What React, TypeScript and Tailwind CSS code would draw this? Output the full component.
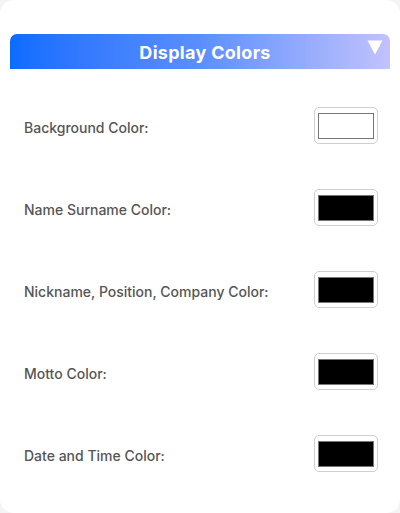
import React from "react";

const rows = [
  { label: "Background Color:", color: "#ffffff" },
  { label: "Name Surname Color:", color: "#000000" },
  { label: "Nickname, Position, Company Color:", color: "#000000" },
  { label: "Motto Color:", color: "#000000" },
  { label: "Date and Time Color:", color: "#000000" },
];

function Swatch({ color }: { color: string }) {
  return (
    <div className="w-[64px] h-[37px] border border-[#cfcfcf] rounded-[5px] bg-white pl-[3px] pr-[3px] pt-[5px] pb-[4px]">
      <div className="w-full h-full border border-[#767676]" style={{ backgroundColor: color }} />
    </div>
  );
}

export default function App() {
  return (
    <div className="w-[400px] h-[513px] bg-[#f4f4f4] font-['Inter',sans-serif]">
      <div className="w-full h-full bg-white rounded-[14px] pt-[34px] px-[10px]">
        <div className="relative h-[35px] rounded-t-[7px] bg-gradient-to-r from-[#0a6cff] via-[#5b8efd] to-[#c2c2fc] flex items-center justify-center">
          <span className="text-white font-bold text-[18px] tracking-[0.3px] pl-[10px] pt-[2px]">Display Colors</span>
          <svg className="absolute right-[7px] top-[6px]" width="16" height="15" viewBox="0 0 16 15">
            <path d="M0.5 0.5 L15.5 0.5 L8 14.5 Z" fill="white" />
          </svg>
        </div>
        <div className="flex flex-col gap-[45px] pt-[38px] pl-[14px] pr-[12px]">
          {rows.map((r) => (
            <div key={r.label} className="flex items-center justify-between h-[37px]">
              <span className="text-[14px] font-medium text-[#555555] pt-[3px]">{r.label}</span>
              <Swatch color={r.color} />
            </div>
          ))}
        </div>
      </div>
    </div>
  );
}
